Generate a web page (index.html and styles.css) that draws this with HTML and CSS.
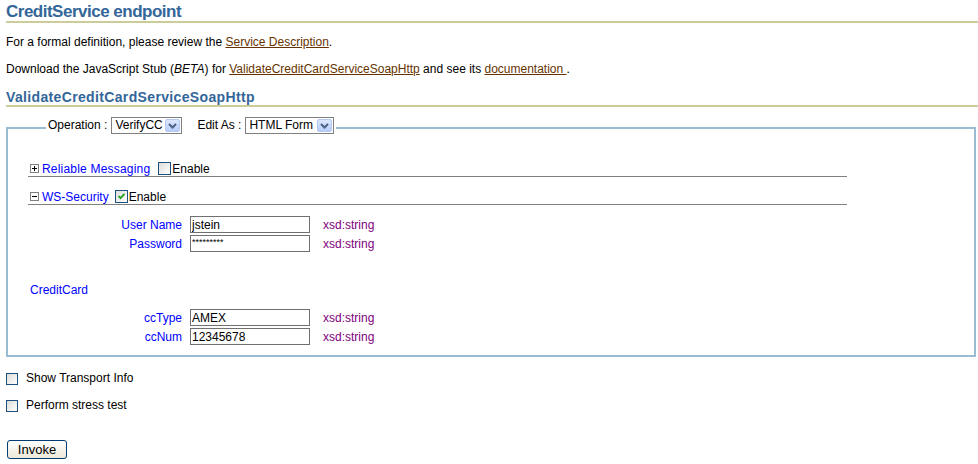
FILE: index.html
```html
<!DOCTYPE html>
<html>
<head>
<meta charset="utf-8">
<title>CreditService endpoint</title>
<link rel="stylesheet" href="styles.css">
</head>
<body>
<h1 class="title">CreditService endpoint</h1>
<p class="para">For a formal definition, please review the <a class="lnk" href="#">Service Description</a>.</p>
<p class="para">Download the JavaScript Stub (<i>BETA</i>) for <a class="lnk" href="#">ValidateCreditCardServiceSoapHttp</a> and see its <a class="lnk" href="#">documentation </a>.</p>
<h2 class="port">ValidateCreditCardServiceSoapHttp</h2>
<fieldset class="op">
  <legend class="op-legend">
    <span class="leg-label">Operation :</span>
    <span class="sel sel-op"><span class="sel-text">VerifyCC</span><span class="sel-btn"><svg width="9" height="6" viewBox="0 0 9 6"><path d="M1 1 L4.5 4.5 L8 1" fill="none" stroke="#4d6185" stroke-width="2"/></svg></span></span>
    <span class="leg-label leg-edit">Edit As :</span>
    <span class="sel sel-edit"><span class="sel-text">HTML Form</span><span class="sel-btn"><svg width="9" height="6" viewBox="0 0 9 6"><path d="M1 1 L4.5 4.5 L8 1" fill="none" stroke="#4d6185" stroke-width="2"/></svg></span></span>
  </legend>
  <div class="sections">
    <div class="sec-head">
      <span class="tree-icon"><svg width="9" height="9" viewBox="0 0 9 9"><rect x="0.5" y="0.5" width="8" height="8" fill="#fff" stroke="#808080"/><path d="M2 4.5 H7 M4.5 2 V7" stroke="#000" stroke-width="1"/></svg></span>
      <span class="sec-name sec-rm">Reliable Messaging</span>
      <span class="cb"></span><span class="cb-label">Enable</span>
    </div>
    <div class="sec-head">
      <span class="tree-icon"><svg width="9" height="9" viewBox="0 0 9 9"><rect x="0.5" y="0.5" width="8" height="8" fill="#fff" stroke="#808080"/><path d="M2 4.5 H7" stroke="#000" stroke-width="1"/></svg></span>
      <span class="sec-name">WS-Security</span>
      <span class="cb cb-checked"><svg width="11" height="11" viewBox="0 0 11 11"><path d="M2.5 5 L4.5 7.2 L8.5 2.8" fill="none" stroke="#21a121" stroke-width="1.8"/></svg></span><span class="cb-label">Enable</span>
    </div>
  </div>
  <div class="fields fields-ws">
    <span class="f-label">User Name</span><span class="f-cell"><input class="f-input" type="text" value="jstein"></span><span class="f-type">xsd:string</span>
    <span class="f-label">Password</span><span class="f-cell"><input class="f-input f-pass" type="text" value="*********"></span><span class="f-type">xsd:string</span>
  </div>
  <div class="group-name">CreditCard</div>
  <div class="fields fields-cc">
    <span class="f-label">ccType</span><span class="f-cell"><input class="f-input" type="text" value="AMEX"></span><span class="f-type">xsd:string</span>
    <span class="f-label">ccNum</span><span class="f-cell"><input class="f-input" type="text" value="12345678"></span><span class="f-type">xsd:string</span>
  </div>
</fieldset>
<div class="opts">
  <div class="opt"><span class="cb"></span><span class="opt-label">Show Transport Info</span></div>
  <div class="opt"><span class="cb"></span><span class="opt-label">Perform stress test</span></div>
</div>
<button class="invoke" type="button">Invoke</button>
</body>
</html>
```
FILE: styles.css
```css
* { box-sizing: border-box; }
html, body { margin: 0; padding: 0; background: #fff; }
body {
  font-family: "Liberation Sans", Arial, sans-serif;
  font-size: 12px;
  color: #000;
  padding-left: 6px;
}
.title {
  margin: 0;
  padding-top: 2px;
  font-size: 17px;
  letter-spacing: -0.5px;
  line-height: 19px;
  font-weight: bold;
  color: #336699;
  border-bottom: 2px solid #cccc99;
}
.para {
  margin: 12px 0;
  line-height: 15px;
}
.lnk { color: #663300; text-decoration: underline; }
.port {
  margin: 12px 0 0 0;
  font-size: 14px;
  letter-spacing: 0.35px;
  line-height: 16px;
  font-weight: bold;
  color: #336699;
  border-bottom: 2px solid #cccc99;
}
.op {
  margin: 10px 2px 0 0;
  padding: 0 0 10px 0;
  border: 2px solid #9bbbd3;
  min-width: 0;
}
.op-legend {
  margin-left: 38px;
  padding: 0 2px 5px 2px;
  display: flex;
  align-items: center;
  height: 22px;
}
.leg-label { line-height: 17px; margin-right: 4px; }
.leg-edit { margin-left: 15px; }
.sel {
  display: inline-flex;
  align-items: center;
  justify-content: space-between;
  height: 17px;
  border: 1px solid #7f7f7f;
  background: #fff;
  padding: 0 1px 0 3px;
}
.sel-op { width: 71px; }
.sel-edit { width: 89px; }
.sel-text { line-height: 15px; }
.sel-btn {
  width: 15px;
  height: 13px;
  border: 1px solid #b5c8f2;
  border-radius: 2px;
  background: linear-gradient(#dce6fd, #b9cdfa);
  display: flex;
  align-items: center;
  justify-content: center;
}
.sections {
  padding-top: 18px;
  margin-left: 20px;
  width: 819px;
}
.sec-head {
  display: flex;
  align-items: center;
  height: 20px;
  padding: 5px 0 1px 2px;
  border-bottom: 1px solid #808080;
  margin-bottom: 8px;
}
.sec-head:last-child { margin-bottom: 0; }
.tree-icon { display: flex; width: 9px; height: 9px; margin-right: 3px; }
.sec-name { color: #0000ff; line-height: 14px; margin-right: 6px; }
.sec-rm { letter-spacing: 0.2px; margin-right: 8px; }
.cb {
  display: inline-flex;
  align-items: center;
  justify-content: center;
  width: 13px;
  height: 13px;
  border: 1px solid #1c5180;
  background: linear-gradient(135deg, #dcdcd7, #ffffff);
  flex: none;
}
.cb-label { line-height: 14px; margin-left: 1px; }
.fields {
  display: grid;
  grid-template-columns: 182px 133px auto;
  row-gap: 2px;
  align-items: center;
}
.fields-ws { margin-top: 11px; }
.f-label { color: #0000ff; text-align: right; padding-right: 8px; line-height: 15px; padding-top: 1px; }
.f-cell { display: flex; }
.f-input {
  width: 120px;
  height: 17px;
  margin: 0;
  border: 1px solid #707070;
  padding: 0 1px;
  font-family: "Liberation Sans", Arial, sans-serif;
  font-size: 12px;
  color: #000;
  background: #fff;
  outline: none;
}
.f-pass { font-size: 9px; padding-bottom: 4px; }
.f-type { color: #800080; line-height: 15px; padding-top: 1px; }
.group-name {
  color: #0000ff;
  margin: 31px 0 0 22px;
  line-height: 15px;
}
.fields-cc { margin-top: 11px; }
.opts { margin-top: 14px; }
.opt {
  display: flex;
  align-items: center;
  height: 15px;
  margin-bottom: 12px;
}
.opt .cb { width: 12px; height: 12px; }
.opt-label { margin-left: 8px; line-height: 15px; }
.invoke {
  margin-top: 15px;
  margin-left: 1px;
  width: 60px;
  height: 19px;
  padding: 0;
  border: 1px solid #003c74;
  border-radius: 3px;
  background: linear-gradient(#ffffff, #ece9d8);
  font-family: "Liberation Sans", Arial, sans-serif;
  font-size: 13px;
  color: #000;
  line-height: 17px;
}
```
